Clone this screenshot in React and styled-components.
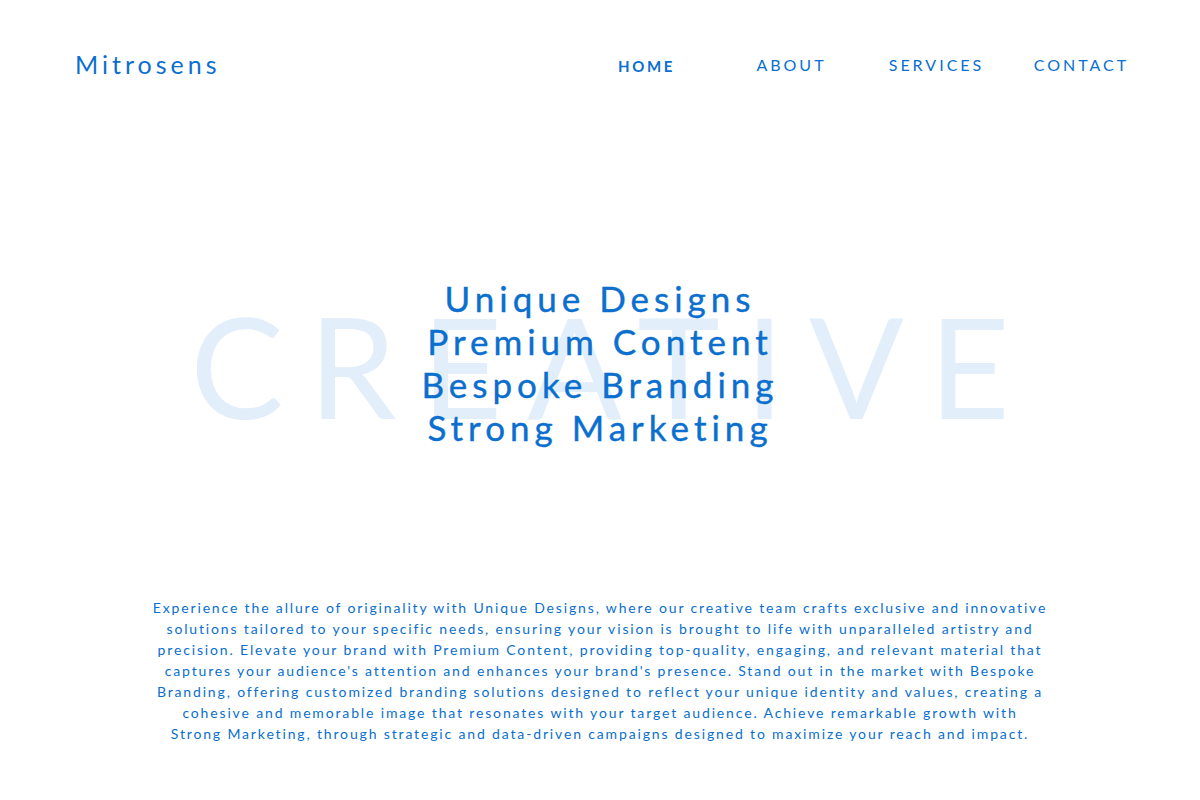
import React from 'react';
import styled, { createGlobalStyle } from 'styled-components';

const blue = '#0a6fce';

const GlobalStyle = createGlobalStyle`
  html, body {
    margin: 0;
    padding: 0;
    background: #ffffff;
  }
  body {
    font-family: Lato, "Open Sans", sans-serif;
    color: ${blue};
  }
`;

const Page = styled.div`
  width: 1200px;
  height: 800px;
  display: flex;
  flex-direction: column;
  overflow: hidden;
`;

const Header = styled.header`
  display: flex;
  align-items: center;
  justify-content: space-between;
  padding: 47px 46px 0 75px;
  height: 36px;
`;

const Logo = styled.div`
  font-size: 25px;
  letter-spacing: 4px;
  font-weight: 400;
  margin-top: -3px;
`;

const Nav = styled.nav`
  display: flex;
`;

const NavItem = styled.a`
  width: 145px;
  text-align: center;
  font-size: ${p => (p.active ? '15px' : '16px')};
  letter-spacing: ${p => (p.active ? '2.6px' : '3px')};
  font-weight: ${p => (p.active ? 700 : 400)};
  color: ${blue};
  text-decoration: none;
  padding-top: ${p => (p.active ? '2px' : '0')};
`;

const Hero = styled.section`
  display: grid;
  place-items: center;
  margin-top: 194px;
`;

const Backdrop = styled.div`
  grid-area: 1 / 1;
  font-size: 140px;
  letter-spacing: 25px;
  margin-right: -25px;
  margin-top: 4px;
  color: #e2eef9;
  line-height: 1;
  font-weight: 400;
`;

const Lines = styled.div`
  grid-area: 1 / 1;
  display: flex;
  flex-direction: column;
  align-items: center;
  font-size: 35px;
  line-height: 43px;
  letter-spacing: 5px;
  font-weight: 400;
  -webkit-text-stroke: 0.4px ${blue};
`;

const Blurb = styled.p`
  margin: 148px auto 0;
  width: 940px;
  text-align: center;
  font-size: 14px;
  line-height: 21px;
  letter-spacing: 1.85px;
`;

const lines = ['Unique Designs', 'Premium Content', 'Bespoke Branding', 'Strong Marketing'];

const blurb = [
  'Experience the allure of originality with Unique Designs, where our creative team crafts exclusive and innovative',
  'solutions tailored to your specific needs, ensuring your vision is brought to life with unparalleled artistry and',
  'precision. Elevate your brand with Premium Content, providing top-quality, engaging, and relevant material that',
  "captures your audience's attention and enhances your brand's presence. Stand out in the market with Bespoke",
  'Branding, offering customized branding solutions designed to reflect your unique identity and values, creating a',
  'cohesive and memorable image that resonates with your target audience. Achieve remarkable growth with',
  'Strong Marketing, through strategic and data-driven campaigns designed to maximize your reach and impact.',
];

export default function App() {
  return (
    <Page>
      <GlobalStyle />
      <Header>
        <Logo>Mitrosens</Logo>
        <Nav>
          <NavItem href="#" active>HOME</NavItem>
          <NavItem href="#">ABOUT</NavItem>
          <NavItem href="#">SERVICES</NavItem>
          <NavItem href="#">CONTACT</NavItem>
        </Nav>
      </Header>
      <Hero>
        <Backdrop>CREATIVE</Backdrop>
        <Lines>
          {lines.map(l => (
            <span key={l}>{l}</span>
          ))}
        </Lines>
      </Hero>
      <Blurb>
        {blurb.map((l, i) => (
          <React.Fragment key={i}>
            {l}
            {i < blurb.length - 1 && <br />}
          </React.Fragment>
        ))}
      </Blurb>
    </Page>
  );
}
